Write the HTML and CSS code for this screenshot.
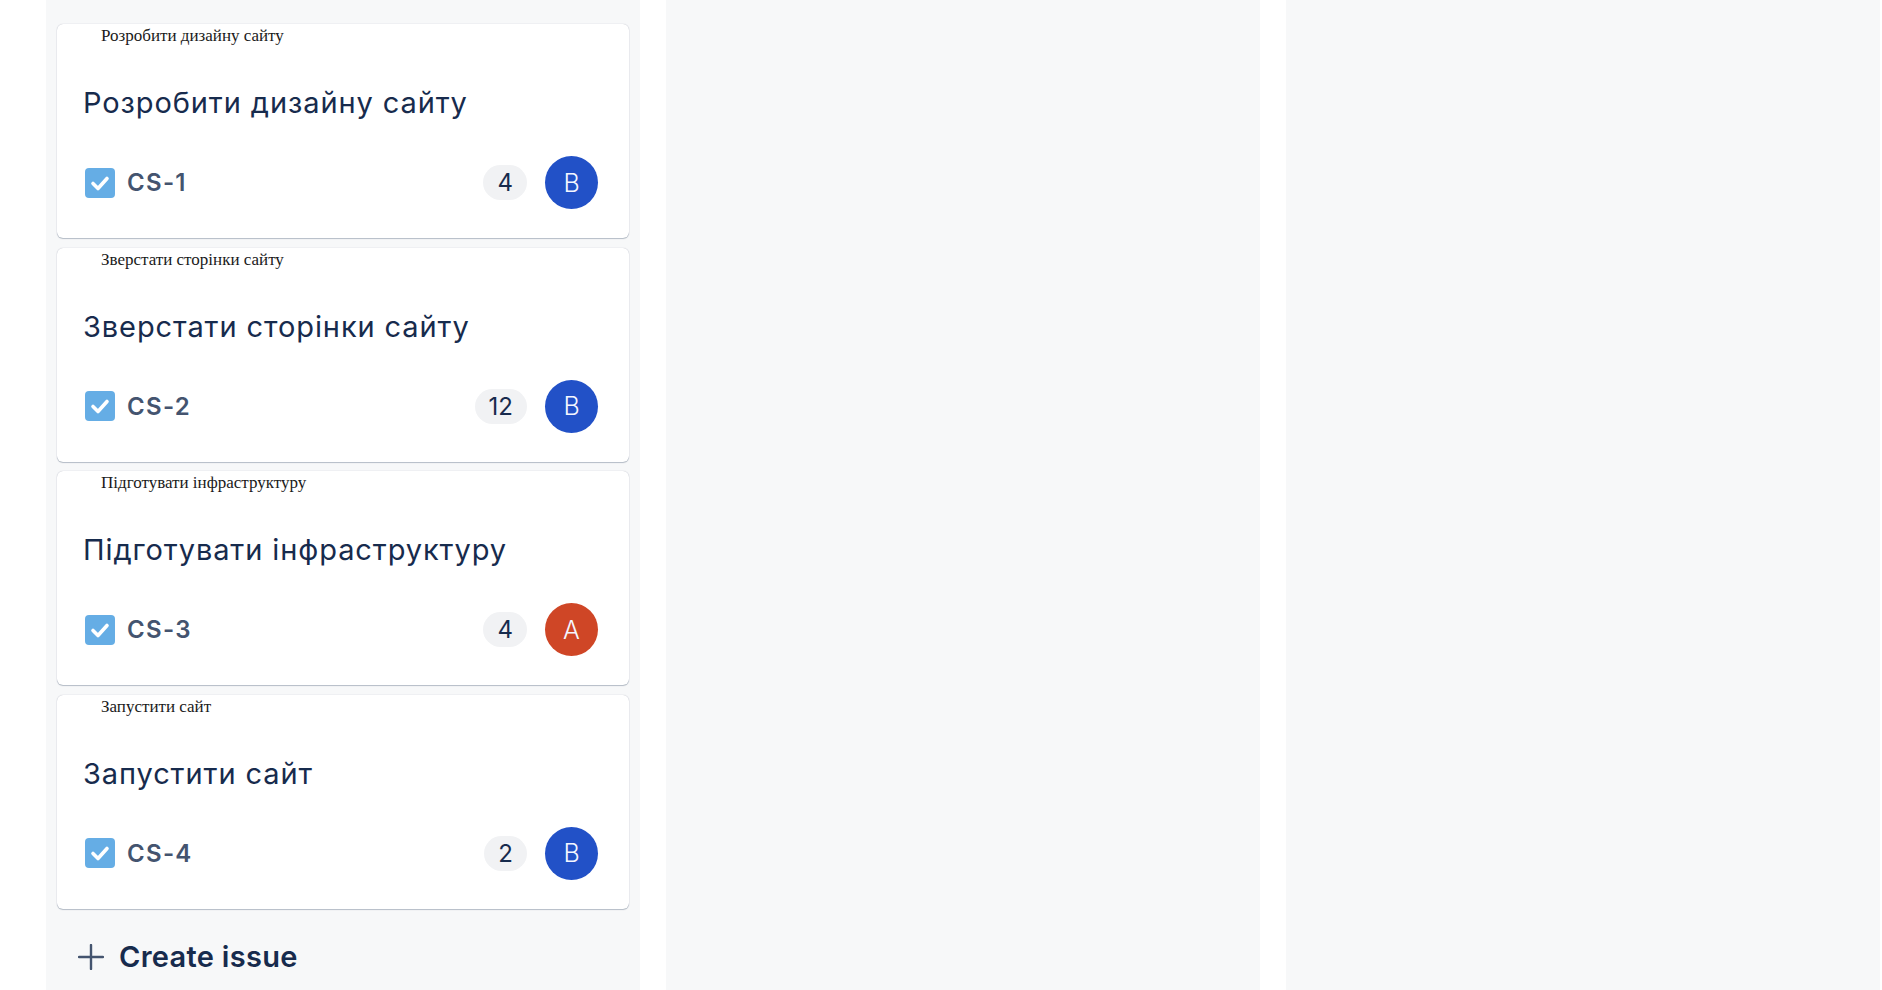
FILE: index.html
```html
<!DOCTYPE html>
<html lang="uk">
<head>
<meta charset="utf-8">
<title>Board</title>
<link rel="stylesheet" href="styles.css">
</head>
<body>
<div class="board">
  <section class="column">
    <div class="card">
      <p class="card-heading">Розробити дизайну сайту</p>
      <h3 class="card-title">Розробити дизайну сайту</h3>
      <div class="card-footer">
        <div class="key">
          <svg class="check" width="34" height="34" viewBox="0 0 34 34"><rect x="2" y="2" width="30" height="30" rx="4" fill="#65ADE5"/><path d="M10 17.5l5 5 9-10" fill="none" stroke="#fff" stroke-width="3.6" stroke-linecap="round" stroke-linejoin="round"/></svg>
          <span class="key-text">CS-1</span>
        </div>
        <div class="meta">
          <span class="pill">4</span>
          <span class="avatar avatar-blue">B</span>
        </div>
      </div>
    </div>
    <div class="card">
      <p class="card-heading">Зверстати сторінки сайту</p>
      <h3 class="card-title">Зверстати сторінки сайту</h3>
      <div class="card-footer">
        <div class="key">
          <svg class="check" width="34" height="34" viewBox="0 0 34 34"><rect x="2" y="2" width="30" height="30" rx="4" fill="#65ADE5"/><path d="M10 17.5l5 5 9-10" fill="none" stroke="#fff" stroke-width="3.6" stroke-linecap="round" stroke-linejoin="round"/></svg>
          <span class="key-text">CS-2</span>
        </div>
        <div class="meta">
          <span class="pill">12</span>
          <span class="avatar avatar-blue">B</span>
        </div>
      </div>
    </div>
    <div class="card">
      <p class="card-heading">Підготувати інфраструктуру</p>
      <h3 class="card-title">Підготувати інфраструктуру</h3>
      <div class="card-footer">
        <div class="key">
          <svg class="check" width="34" height="34" viewBox="0 0 34 34"><rect x="2" y="2" width="30" height="30" rx="4" fill="#65ADE5"/><path d="M10 17.5l5 5 9-10" fill="none" stroke="#fff" stroke-width="3.6" stroke-linecap="round" stroke-linejoin="round"/></svg>
          <span class="key-text">CS-3</span>
        </div>
        <div class="meta">
          <span class="pill">4</span>
          <span class="avatar avatar-red">A</span>
        </div>
      </div>
    </div>
    <div class="card">
      <p class="card-heading">Запустити сайт</p>
      <h3 class="card-title">Запустити сайт</h3>
      <div class="card-footer">
        <div class="key">
          <svg class="check" width="34" height="34" viewBox="0 0 34 34"><rect x="2" y="2" width="30" height="30" rx="4" fill="#65ADE5"/><path d="M10 17.5l5 5 9-10" fill="none" stroke="#fff" stroke-width="3.6" stroke-linecap="round" stroke-linejoin="round"/></svg>
          <span class="key-text">CS-4</span>
        </div>
        <div class="meta">
          <span class="pill">2</span>
          <span class="avatar avatar-blue">B</span>
        </div>
      </div>
    </div>
    <button class="create">
      <svg width="26" height="26" viewBox="0 0 26 26"><path d="M13 1v24M1 13h24" stroke="#44546F" stroke-width="2.4" stroke-linecap="round"/></svg>
      <span>Create issue</span>
    </button>
  </section>
  <section class="column"></section>
  <section class="column"></section>
</div>
</body>
</html>
```
FILE: styles.css
```css
html, body {
  margin: 0;
  padding: 0;
  background: #ffffff;
  height: 100%;
  overflow: hidden;
}

.board {
  display: flex;
  gap: 26px;
  padding-left: 46px;
  height: 990px;
}

.column {
  width: 594px;
  flex: 0 0 594px;
  background: #F7F8F9;
  padding: 24px 11px 0;
  box-sizing: border-box;
  display: flex;
  flex-direction: column;
  gap: 9.5px;
}

.card {
  background: #fff;
  border-radius: 6px;
  box-shadow: 0 1px 1px rgba(9, 30, 66, 0.25), 0 0 1px rgba(9, 30, 66, 0.31);
  padding: 3px 31px 29px 26px;
  display: flex;
  flex-direction: column;
}

.card-heading {
  margin: 0;
  padding-left: 18px;
  font-family: "Liberation Serif", "Times New Roman", serif;
  font-size: 17px;
  line-height: 18px;
  color: #1a1a1a;
}

.card-title {
  margin: 41px 0 0;
  font-family: Inter, "Noto Sans", sans-serif;
  font-weight: 400;
  font-size: 29px;
  letter-spacing: 0.9px;
  line-height: 34px;
  color: #172B4D;
}

.card-footer {
  margin-top: 36px;
  display: flex;
  align-items: center;
  justify-content: space-between;
  height: 53px;
}

.key {
  display: flex;
  align-items: center;
  gap: 10px;
}

.check {
  display: block;
}

.key-text {
  font-family: Inter, "Noto Sans", sans-serif;
  font-weight: 600;
  font-size: 24px;
  letter-spacing: 1.3px;
  color: #44546F;
}

.meta {
  display: flex;
  align-items: center;
  gap: 18px;
}

.pill {
  display: inline-flex;
  align-items: center;
  justify-content: center;
  height: 35px;
  min-width: 43px;
  padding: 0 14px;
  box-sizing: border-box;
  border-radius: 18px;
  background: #F1F2F4;
  font-family: Inter, "Noto Sans", sans-serif;
  font-size: 24px;
  color: #172B4D;
}

.avatar {
  width: 53px;
  height: 53px;
  border-radius: 50%;
  display: inline-flex;
  align-items: center;
  justify-content: center;
  font-family: Inter, "Noto Sans", sans-serif;
  font-weight: 300;
  font-size: 25px;
  color: #F4F6FF;
}

.avatar-blue {
  background: #2251C7;
}

.avatar-red {
  background: #CF4626;
}

.create {
  margin-top: 21px;
  display: flex;
  align-items: center;
  gap: 15px;
  padding: 0 0 0 21px;
  border: none;
  background: transparent;
  font-family: Inter, "Noto Sans", sans-serif;
  font-weight: 600;
  font-size: 29px;
  letter-spacing: 0.3px;
  color: #172B4D;
  cursor: pointer;
}

.create svg {
  display: block;
}
```
